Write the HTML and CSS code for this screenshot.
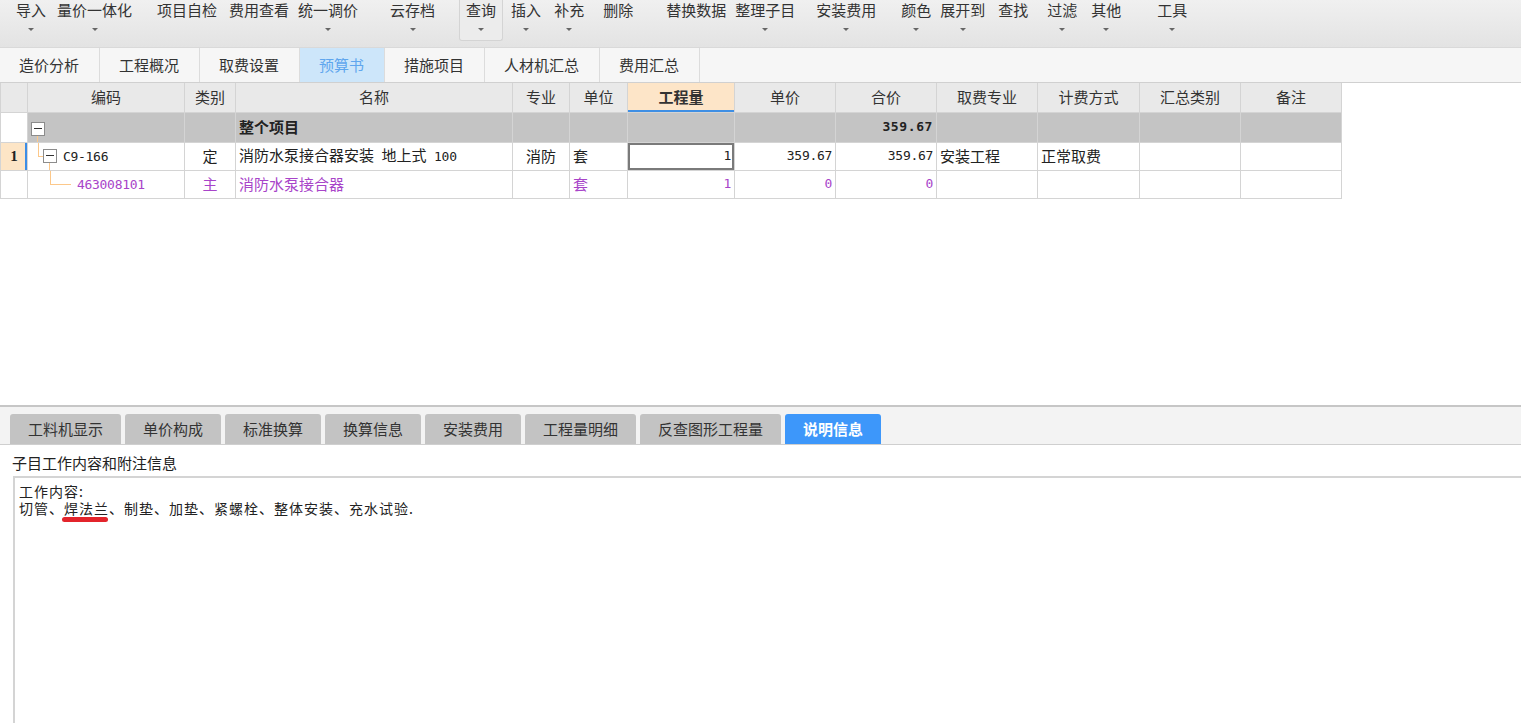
FILE: index.html
```html
<!DOCTYPE html>
<html lang="zh-CN">
<head>
<meta charset="utf-8">
<title>预算书</title>
<link rel="stylesheet" href="styles.css">
</head>
<body>
<div class="toolbar">
  <div class="tb">导入<span class="caret"></span></div>
  <div class="tb">量价一体化<span class="caret"></span></div>
  <div class="tb">项目自检</div>
  <div class="tb">费用查看</div>
  <div class="tb">统一调价<span class="caret"></span></div>
  <div class="tb">云存档<span class="caret"></span></div>
  <div class="tb pressed">查询<span class="caret"></span></div>
  <div class="tb">插入<span class="caret"></span></div>
  <div class="tb">补充<span class="caret"></span></div>
  <div class="tb">删除</div>
  <div class="tb">替换数据</div>
  <div class="tb">整理子目<span class="caret"></span></div>
  <div class="tb">安装费用<span class="caret"></span></div>
  <div class="tb">颜色<span class="caret"></span></div>
  <div class="tb">展开到<span class="caret"></span></div>
  <div class="tb">查找</div>
  <div class="tb">过滤<span class="caret"></span></div>
  <div class="tb">其他<span class="caret"></span></div>
  <div class="tb">工具<span class="caret"></span></div>
</div>

<div class="tabs">
  <div class="tab">造价分析</div>
  <div class="tab">工程概况</div>
  <div class="tab">取费设置</div>
  <div class="tab on">预算书</div>
  <div class="tab">措施项目</div>
  <div class="tab">人材机汇总</div>
  <div class="tab">费用汇总</div>
</div>

<div class="grid-panel">
  <table class="grid">
    <colgroup>
      <col class="w27"><col class="w157"><col class="w51"><col class="w277"><col class="w57"><col class="w58"><col class="w107"><col class="w101"><col class="w101"><col class="w101"><col class="w102"><col class="w101"><col class="w101">
    </colgroup>
    <thead>
      <tr>
        <th class="rn"></th><th>编码</th><th>类别</th><th>名称</th><th>专业</th><th>单位</th><th class="qty">工程量</th><th>单价</th><th>合价</th><th>取费专业</th><th>计费方式</th><th>汇总类别</th><th>备注</th>
      </tr>
    </thead>
    <tbody>
      <tr class="grp">
        <td class="rn"></td>
        <td class="code"><span class="tbox"></span></td>
        <td></td>
        <td class="bold">整个项目</td>
        <td></td><td></td><td></td><td></td>
        <td class="right num bold">359.67</td>
        <td></td><td></td><td></td><td></td>
      </tr>
      <tr class="r1">
        <td class="rn cur">1</td>
        <td class="code lvl1"><span class="tbox mid"></span><span class="num code-text">C9-166</span></td>
        <td class="center">定</td>
        <td>消防水泵接合器安装<span class="num"> </span>地上式<span class="num"> 100</span></td>
        <td class="center">消防</td>
        <td>套</td>
        <td class="right num sel">1</td>
        <td class="right num">359.67</td>
        <td class="right num">359.67</td>
        <td>安装工程</td>
        <td>正常取费</td>
        <td></td><td></td>
      </tr>
      <tr class="r2 sub">
        <td class="rn"></td>
        <td class="code"><span class="twig"></span><span class="num">463008101</span></td>
        <td class="center">主</td>
        <td>消防水泵接合器</td>
        <td></td>
        <td>套</td>
        <td class="right num">1</td>
        <td class="right num">0</td>
        <td class="right num">0</td>
        <td></td><td></td><td></td><td></td>
      </tr>
    </tbody>
  </table>
</div>

<div class="bottom">
  <div class="btabs">
    <div class="btab">工料机显示</div>
    <div class="btab">单价构成</div>
    <div class="btab">标准换算</div>
    <div class="btab">换算信息</div>
    <div class="btab">安装费用</div>
    <div class="btab">工程量明细</div>
    <div class="btab">反查图形工程量</div>
    <div class="btab on">说明信息</div>
  </div>
  <div class="desc-title">子目工作内容和附注信息</div>
  <div class="desc-box">
    <div>工作内容:</div>
    <div>切管、<span class="mark">焊法兰</span>、制垫、加垫、紧螺栓、整体安装、充水试验.</div>
  </div>
</div>
</body>
</html>
```

FILE: styles.css
```css
* { box-sizing: border-box; }
html, body { margin: 0; padding: 0; }
body {
  width: 1521px;
  height: 723px;
  overflow: hidden;
  display: flex;
  flex-direction: column;
  background: #fff;
  color: #222;
  font-family: "Noto Sans CJK SC", "Noto Sans", sans-serif;
  font-size: 15px;
}

/* ---------- toolbar ---------- */
.toolbar {
  flex: none;
  height: 48px;
  display: flex;
  align-items: flex-start;
  background: linear-gradient(#f0f0f0, #e3e3e3);
  border-bottom: 1px solid #d9d9d9;
}
.tb {
  display: flex;
  flex-direction: column;
  align-items: center;
  padding: 0 4px;
  line-height: 20px;
  white-space: nowrap;
  color: #333;
}
.caret {
  width: 0;
  height: 0;
  margin-top: 8px;
  border-left: 3px solid transparent;
  border-right: 3px solid transparent;
  border-top: 3px solid #666;
}
.tb.pressed {
  height: 41px;
  padding: 0 6px;
  background: #ececec;
  border: 1px solid #d4d4d4;
  border-top: none;
  border-radius: 0 0 3px 3px;
}
.tb:nth-child(1) { margin-left: 12px; }
.tb:nth-child(2) { margin-left: 3px; }
.tb:nth-child(3) { margin-left: 17px; }
.tb:nth-child(4) { margin-left: 4px; }
.tb:nth-child(5) { margin-left: 1px; }
.tb:nth-child(6) { margin-left: 24px; }
.tb:nth-child(7) { margin-left: 20px; }
.tb:nth-child(8) { margin-left: 4px; }
.tb:nth-child(9) { margin-left: 5px; }
.tb:nth-child(10) { margin-left: 11px; }
.tb:nth-child(11) { margin-left: 25px; }
.tb:nth-child(12) { margin-left: 1px; }
.tb:nth-child(13) { margin-left: 13px; }
.tb:nth-child(14) { margin-left: 17px; }
.tb:nth-child(15) { margin-left: 1px; }
.tb:nth-child(16) { margin-left: 5px; }
.tb:nth-child(17) { margin-left: 11px; }
.tb:nth-child(18) { margin-left: 6px; }
.tb:nth-child(19) { margin-left: 28px; }

/* ---------- module tabs ---------- */
.tabs {
  flex: none;
  height: 35px;
  display: flex;
  background: #f6f6f6;
  border-bottom: 1px solid #d0d0d0;
}
.tab {
  padding: 0 20px 0 19px;
  line-height: 34px;
  border-right: 1px solid #dcdcdc;
  color: #333;
  white-space: nowrap;
}
.tab.on {
  background: #cde6fa;
  color: #5fa6ee;
}

/* ---------- grid ---------- */
.grid-panel {
  flex: none;
  height: 322px;
  overflow: hidden;
}
.grid {
  border-collapse: collapse;
  table-layout: fixed;
  width: 1342px;
}
.w27 { width: 27px; }
.w51 { width: 51px; }
.w57 { width: 57px; }
.w58 { width: 58px; }
.w101 { width: 101px; }
.w102 { width: 102px; }
.w107 { width: 107px; }
.w157 { width: 157px; }
.w277 { width: 277px; }

.grid th,
.grid td {
  border: 1px solid #d4d4d4;
  padding: 0 3px;
  white-space: nowrap;
  overflow: hidden;
  text-align: left;
  vertical-align: middle;
  line-height: 20px;
}
.grid tr:first-child th { border-top: none; }
.grid th {
  height: 29px;
  background: #e9e9e9;
  font-weight: normal;
  text-align: center;
  color: #333;
}
.grid th.qty {
  background: #fde5c8;
  font-weight: bold;
  box-shadow: inset 0 -2px 0 #3f8fe4;
}
.grid .grp td { height: 30px; background: #c4c4c4; }
.grid .grp td.rn { background: #fff; }
.grid .r1 td,
.grid .r2 td { height: 28px; }

.grid td.rn {
  padding: 0;
  text-align: center;
  font-family: "Liberation Serif", serif;
  font-weight: bold;
  font-size: 15px;
}
.grid td.rn.cur {
  background: #fde5c6;
  box-shadow: inset -2px 0 0 #3c8de6;
}
.grid .center { text-align: center; }
.grid .right { text-align: right; }
.grid .bold { font-weight: bold; }
.num {
  font-family: "DejaVu Sans Mono", monospace;
  font-size: 13px;
  letter-spacing: -0.3px;
}
.grid td.num.bold { letter-spacing: 0.6px; }
.grid td.sel { box-shadow: inset 0 0 0 2px #7a7a7a; }
.grid .sub td { color: #a844c9; }

/* tree */
.grid td.code { padding-left: 3px; }
.grid td.code.lvl1 { padding-left: 15px; position: relative; }
.tbox {
  position: relative;
  display: inline-block;
  width: 14px;
  height: 14px;
  vertical-align: middle;
  border: 1px solid #8c8c8c;
  background: #fff;
}
.tbox::before {
  content: "";
  position: absolute;
  left: 2px;
  top: 5px;
  width: 8px;
  height: 1px;
  background: #333;
}
.tbox::after {
  content: "";
  position: absolute;
  left: 5px;
  top: 13px;
  width: 1px;
  height: 10px;
  background: #fcc88a;
}
.tbox.mid { margin-top: -1px; }
.code-text { margin-left: 6px; }
.twig {
  position: relative;
  display: inline-block;
  width: 21px;
  height: 1px;
  margin: 0 6px 0 19px;
  vertical-align: middle;
  background: #fcc88a;
}
.twig::before {
  content: "";
  position: absolute;
  left: 0;
  bottom: 0;
  width: 1px;
  height: 16px;
  background: #fcc88a;
}
.grid td.lvl1::before {
  content: "";
  position: absolute;
  left: 10px;
  top: -1px;
  width: 6px;
  height: 14px;
  border-left: 1px solid #fcc88a;
  border-bottom: 1px solid #fcc88a;
}

/* ---------- bottom panel ---------- */
.bottom {
  flex: 1;
  display: flex;
  flex-direction: column;
  min-height: 0;
}
.btabs {
  flex: none;
  display: flex;
  gap: 4px;
  padding: 7px 10px 0;
  background: #f3f3f3;
  border-top: 2px solid #c6c6c6;
  border-bottom: 1px solid #cfcfcf;
}
.btab {
  height: 30px;
  line-height: 30px;
  padding: 0 18px;
  background: #c3c3c3;
  border-radius: 3px 3px 0 0;
  color: #333;
  white-space: nowrap;
}
.btab.on {
  background: #3d97fa;
  color: #fff;
  font-weight: bold;
}
.desc-title {
  flex: none;
  padding: 7px 12px 2px;
  line-height: 22px;
  color: #222;
}
.desc-box {
  flex: 1;
  margin-left: 13px;
  padding: 5px 4px;
  border-top: 2px solid #d4d4d4;
  border-left: 2px solid #d4d4d4;
  font-size: 14px;
  letter-spacing: 1px;
  line-height: 17px;
  color: #222;
}
.mark { position: relative; }
.mark::after {
  content: "";
  position: absolute;
  left: -2px;
  top: calc(100% - 1px);
  width: 46px;
  height: 5px;
  border-radius: 3px;
  background: #e3242b;
}
```
